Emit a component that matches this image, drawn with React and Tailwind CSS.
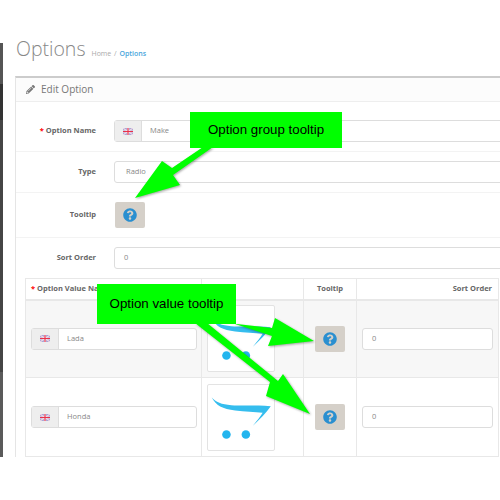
import React from 'react'
import { FaPencilAlt, FaQuestionCircle } from 'react-icons/fa'

function Flag() {
    return (
        <svg width="10" height="7" viewBox="0 0 10 7">
            <rect width="10" height="7" fill="#a5a2d6" />
            <path d="M0 0L10 7M10 0L0 7" stroke="#eed9e4" strokeWidth="1.2" />
            <path d="M5 0V7M0 3.500H10" stroke="#f4dfe6" strokeWidth="2.200" />
            <path d="M5 0V7M0 3.500H10" stroke="#e8304a" strokeWidth="1.100" />
        </svg>
    )
}

function FlagInput({ value, className }) {
    return (
        <div className={`flex h-[22px] border border-[#ddd] rounded-[3px] bg-white ${className}`}>
            <div className="w-[27px] shrink-0 flex items-center justify-center bg-[#eee] border-r border-[#ddd]">
                <Flag />
            </div>
            <div className="flex-1 pl-[8px] flex items-center text-[7.500px] text-[#888]">{value}</div>
        </div>
    )
}

function TextInput({ value, className }) {
    return (
        <div className={`h-[22px] border border-[#ddd] rounded-[3px] bg-white pl-[9px] flex items-center text-[7.500px] text-[#888] ${className}`}>
            {value}
        </div>
    )
}

function HelpButton({ className }) {
    return (
        <div className={`w-[30px] h-[26px] rounded-[2px] bg-[#d5d0c9] flex items-center justify-center ${className}`}>
            <FaQuestionCircle className="text-[#2a8fd0] text-[14px]" />
        </div>
    )
}

function FormRow({ label, required, children, className }) {
    return (
        <div className={`flex items-center border-b border-[#f3f3f3] ${className}`}>
            <label className="w-[80px] shrink-0 text-right text-[7.500px] font-bold text-[#666]">
                {required && <span className="text-[#f00] mr-[2px]">*</span>}
                {label}
            </label>
            <div className="flex-1 pl-[18px]">{children}</div>
        </div>
    )
}

function Logo() {
    return (
        <div className="w-[68px] h-[67px] ml-[5px] border border-[#e3e3e3] rounded-[2px] bg-white">
            <svg width="66" height="65" viewBox="0 0 68 67">
                <path d="M3.700 12.700C8 18 14 20 24 20.800C34 21.600 50 20.500 64.700 22C60 29 53 36 46.300 42C50 37 54 33 56.300 28.700C48 27.800 38 27.500 28 26.300C15 25 8 21 3.700 12.700Z" fill="#35bdee" />
                <circle cx="19" cy="51" r="4.400" fill="#23b5ee" />
                <circle cx="39" cy="51" r="4.400" fill="#23b5ee" />
            </svg>
        </div>
    )
}

function ValueRow({ name, className }) {
    return (
        <tr className={className}>
            <td className="border border-[#e8e8e8] px-[5px] align-middle">
                <FlagInput value={name} className="w-[166px]" />
            </td>
            <td className="border border-[#e8e8e8] align-middle">
                <Logo />
            </td>
            <td className="border border-[#e8e8e8] align-middle">
                <div className="flex justify-center">
                    <HelpButton />
                </div>
            </td>
            <td className="border border-[#e8e8e8] px-[5px] align-middle">
                <TextInput value="0" className="w-[131px]" />
            </td>
        </tr>
    )
}

function App() {
    return (
        <div className="relative w-[500px] h-[500px] overflow-hidden bg-white font-['Open_Sans',sans-serif]">
            <div className="flex h-[457px] overflow-hidden">
                <div className="w-[3px] shrink-0 mt-[43px] bg-[linear-gradient(#555_10%,#333_10%,#333_18.600%,#454545_18.600%,#454545_79.500%,#5a5a5a_79.500%)]" />
                <div className="flex-1 pl-[12px] pt-[36px] min-w-0">
                    <div className="flex items-start h-[40px]">
                        <h1 className="pl-[1px] pt-[1px] text-[19.500px] font-light text-[#888] leading-[24px]">Options</h1>
                        <div className="ml-[6px] mt-[13px] text-[7px] text-[#aaa]">
                            Home <span className="mx-[1px]">/</span> <span className="text-[#4aa6dc] font-semibold">Options</span>
                        </div>
                    </div>
                    <div className="w-[510px] h-[381px] border-l border-[#e5e5e5] border-t-2 border-t-[#ccc]">
                        <div className="h-[24px] flex items-center pl-[10px] gap-[6px] bg-[#fcfcfc] border-b border-[#eee] text-[#777]">
                            <FaPencilAlt className="text-[9px]" />
                            <span className="text-[10px]">Edit Option</span>
                        </div>
                        <FormRow label="Option Name" required className="h-[50px] pt-[9px]">
                            <FlagInput value="Make" className="w-[400px]" />
                        </FormRow>
                        <FormRow label="Type" className="h-[41px]">
                            <TextInput value="Radio" className="w-[400px] pl-[11px]" />
                        </FormRow>
                        <FormRow label="Tooltip" className="h-[45px]">
                            <HelpButton className="ml-[1px]" />
                        </FormRow>
                        <FormRow label="Sort Order" className="h-[40px] border-b-0">
                            <TextInput value="0" className="w-[400px]" />
                        </FormRow>
                        <table className="ml-[9px] border-collapse table-fixed w-[473px] text-[7.500px] text-[#666] font-bold">
                            <thead>
                                <tr className="h-[21px] border-b-2 border-[#e8e8e8]">
                                    <th className="w-[176px] border border-[#e8e8e8] pl-[5px] text-left font-bold">
                                        <span className="text-[#f00] mr-[2px]">*</span>Option Value Name
                                    </th>
                                    <th className="w-[102px] border border-[#e8e8e8]"></th>
                                    <th className="w-[53px] border border-[#e8e8e8] font-bold">Tooltip</th>
                                    <th className="w-[142px] border border-[#e8e8e8] pr-[6px] text-right font-bold">Sort Order</th>
                                </tr>
                            </thead>
                            <tbody className="font-normal">
                                <ValueRow name="Lada" className="h-[78px] bg-[#f7f7f7]" />
                                <ValueRow name="Honda" className="h-[79px]" />
                            </tbody>
                        </table>
                    </div>
                </div>
            </div>

            {/* callouts drawn over the page */}
            <svg className="absolute inset-0 drop-shadow-[1px_1px_1px_rgba(0,0,0,0.35)]" width="500" height="500" viewBox="0 0 500 500">
                <path d="M203 147L172 168L162 161L135 198L180 185L173 175L213 147Z" fill="#00ff00" />
                <path d="M228 323L272 328L275 318L314 341L268 346L272 336L235 324Z" fill="#00ff00" />
                <path d="M195 323L270 382L266 396L310 414L283 374L278 381L207 323Z" fill="#00ff00" />
            </svg>
            <div className="absolute left-[190px] top-[112px] w-[152px] h-[36px] bg-[#00ff00] flex items-center justify-center font-['Liberation_Sans',sans-serif] text-[13.300px] text-black">
                Option group tooltip
            </div>
            <div className="absolute left-[97px] top-[284px] w-[139px] h-[40px] bg-[#00ff00] flex items-center justify-center font-['Liberation_Sans',sans-serif] text-[13.300px] text-black">
                Option value tooltip
            </div>
        </div>
    )
}

export default App
